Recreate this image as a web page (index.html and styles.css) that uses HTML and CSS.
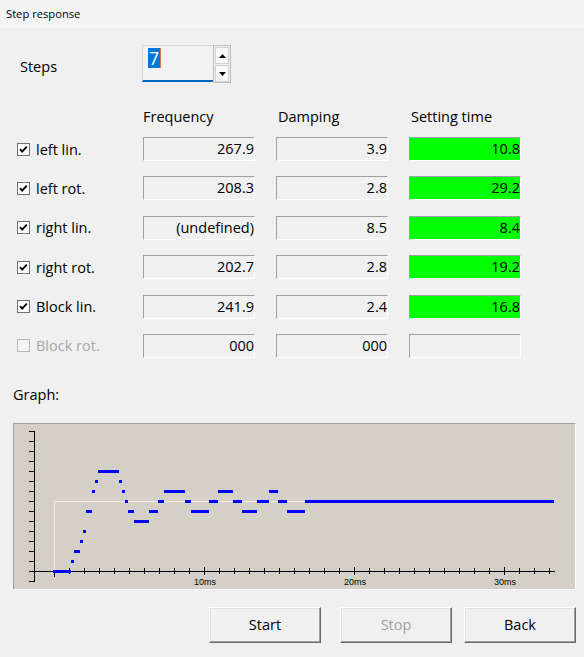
FILE: index.html
```html
<!DOCTYPE html>
<html>
<head>
<meta charset="utf-8">
<link rel="stylesheet" href="styles.css">
</head>
<body>
<div class="titlebar">Step response</div>

<div class="steps">
  <span class="steps-label">Steps</span>
  <div class="spin">
    <div class="spin-input"><span class="sel">7</span></div>
    <div class="spin-btns">
      <div class="spin-btn"><svg width="7" height="4" viewBox="0 0 7 4"><path d="M0 4 L3.5 0 L7 4 Z" fill="#000"/></svg></div>
      <div class="spin-btn"><svg width="7" height="4" viewBox="0 0 7 4"><path d="M0 0 L3.5 4 L7 0 Z" fill="#000"/></svg></div>
    </div>
  </div>
</div>

<div class="head">
  <span></span>
  <span>Frequency</span>
  <span class="shift">Damping</span>
  <span class="shift">Setting time</span>
</div>

<div class="table">
  <label class="chk"><svg class="box" width="13" height="13" viewBox="0 0 13 13"><rect x="0.5" y="0.5" width="12" height="12" fill="#fff" stroke="#707070"/><path d="M3 6.2 L5.2 8.6 L9.8 3.6" fill="none" stroke="#000" stroke-width="1.8"/></svg>left lin.</label>
  <div class="field">267.9</div>
  <div class="field">3.9</div>
  <div class="field ok">10.8</div>

  <label class="chk"><svg class="box" width="13" height="13" viewBox="0 0 13 13"><rect x="0.5" y="0.5" width="12" height="12" fill="#fff" stroke="#707070"/><path d="M3 6.2 L5.2 8.6 L9.8 3.6" fill="none" stroke="#000" stroke-width="1.8"/></svg>left rot.</label>
  <div class="field">208.3</div>
  <div class="field">2.8</div>
  <div class="field ok">29.2</div>

  <label class="chk"><svg class="box" width="13" height="13" viewBox="0 0 13 13"><rect x="0.5" y="0.5" width="12" height="12" fill="#fff" stroke="#707070"/><path d="M3 6.2 L5.2 8.6 L9.8 3.6" fill="none" stroke="#000" stroke-width="1.8"/></svg>right lin.</label>
  <div class="field">(undefined)</div>
  <div class="field">8.5</div>
  <div class="field ok">8.4</div>

  <label class="chk"><svg class="box" width="13" height="13" viewBox="0 0 13 13"><rect x="0.5" y="0.5" width="12" height="12" fill="#fff" stroke="#707070"/><path d="M3 6.2 L5.2 8.6 L9.8 3.6" fill="none" stroke="#000" stroke-width="1.8"/></svg>right rot.</label>
  <div class="field">202.7</div>
  <div class="field">2.8</div>
  <div class="field ok">19.2</div>

  <label class="chk"><svg class="box" width="13" height="13" viewBox="0 0 13 13"><rect x="0.5" y="0.5" width="12" height="12" fill="#fff" stroke="#707070"/><path d="M3 6.2 L5.2 8.6 L9.8 3.6" fill="none" stroke="#000" stroke-width="1.8"/></svg>Block lin.</label>
  <div class="field">241.9</div>
  <div class="field">2.4</div>
  <div class="field ok">16.8</div>

  <label class="chk disabled"><svg class="box" width="13" height="13" viewBox="0 0 13 13"><rect x="0.5" y="0.5" width="12" height="12" fill="#f4f4f4" stroke="#b4b4b4"/></svg>Block rot.</label>
  <div class="field">000</div>
  <div class="field">000</div>
  <div class="field"></div>
</div>

<div class="graph-label">Graph:</div>

<div class="graph">
  <svg width="561" height="165" viewBox="14 424 561 165">
    <path d="M54.5 571 V501.5 H305" fill="none" stroke="#ececec" stroke-width="1"/>
    <g fill="none" stroke="#000" stroke-width="1">
      <path d="M34.5 431 V582 M29 571.5 H555"/>
      <path d="M29 431.5h5M29 441.5h5M29 451.5h5M29 461.5h5M29 471.5h5M29 481.5h5M29 491.5h5M29 501.5h5M29 511.5h5M29 521.5h5M29 531.5h5M29 541.5h5M29 551.5h5M29 561.5h5M29 571.5h5M29 581.5h5"/>
      <path d="M54.5 571v6M69.5 568v6M84.5 568v6M99.5 568v6M114.5 568v6M129.5 568v6M144.5 568v6M159.5 568v6M174.5 568v6M189.5 568v6M204.5 567v8M219.5 568v6M234.5 568v6M249.5 568v6M264.5 568v6M279.5 568v6M294.5 568v6M309.5 568v6M324.5 568v6M339.5 568v6M354.5 567v8M369.5 568v6M384.5 568v6M399.5 568v6M414.5 568v6M429.5 568v6M444.5 568v6M459.5 568v6M474.5 568v6M489.5 568v6M504.5 567v8M519.5 568v6M534.5 568v6M549.5 568v6"/>
    </g>
    <g class="axis-text">
      <text x="205" y="585" text-anchor="middle">10ms</text>
      <text x="355" y="585" text-anchor="middle">20ms</text>
      <text x="505" y="585" text-anchor="middle">30ms</text>
    </g>
    <g fill="#0000ff">
      <rect x="53" y="570" width="18" height="3"/>
      <rect x="71" y="560" width="3" height="3"/>
      <rect x="74" y="550" width="6" height="3"/>
      <rect x="80" y="540" width="3" height="3"/>
      <rect x="83" y="530" width="3" height="3"/>
      <rect x="86" y="510" width="6" height="3"/>
      <rect x="92" y="490" width="3" height="3"/>
      <rect x="95" y="480" width="3" height="3"/>
      <rect x="98" y="470" width="21" height="3"/>
      <rect x="119" y="480" width="3" height="3"/>
      <rect x="122" y="490" width="3" height="3"/>
      <rect x="125" y="500" width="3" height="3"/>
      <rect x="128" y="510" width="6" height="3"/>
      <rect x="134" y="520" width="15" height="3"/>
      <rect x="149" y="510" width="9" height="3"/>
      <rect x="158" y="500" width="6" height="3"/>
      <rect x="164" y="490" width="21" height="3"/>
      <rect x="185" y="500" width="6" height="3"/>
      <rect x="191" y="510" width="18" height="3"/>
      <rect x="209" y="500" width="9" height="3"/>
      <rect x="218" y="490" width="15" height="3"/>
      <rect x="233" y="500" width="9" height="3"/>
      <rect x="242" y="510" width="15" height="3"/>
      <rect x="257" y="500" width="12" height="3"/>
      <rect x="269" y="490" width="9" height="3"/>
      <rect x="278" y="500" width="9" height="3"/>
      <rect x="287" y="510" width="18" height="3"/>
      <rect x="305" y="500" width="249" height="3"/>
    </g>
  </svg>
</div>

<div class="buttons">
  <button class="btn start">Start</button>
  <button class="btn stop" disabled>Stop</button>
  <button class="btn">Back</button>
</div>
</body>
</html>
```

FILE: styles.css
```css
html, body {
  margin: 0;
  padding: 0;
}
body {
  width: 584px;
  height: 657px;
  background: #f0f0f0;
  font-family: "Open Sans", "Noto Sans", sans-serif;
  font-size: 14.5px;
  color: #000;
  overflow: hidden;
}
.titlebar {
  height: 28px;
  line-height: 28px;
  padding-left: 6px;
  font-size: 11.2px;
  background: #f4f4f4;
}
.steps {
  display: flex;
  margin-top: 17px;
  height: 37px;
}
.steps-label {
  box-sizing: border-box;
  width: 142px;
  padding-left: 20px;
  padding-top: 11px;
  line-height: 22px;
}
.spin {
  display: flex;
}
.spin-input {
  box-sizing: border-box;
  width: 71px;
  height: 37px;
  border-top: 1px solid #d8d8d8;
  border-left: 1px solid #d8d8d8;
  border-bottom: 2px solid #0067c0;
  padding-left: 5px;
  padding-top: 2px;
  background: #f2f2f2;
}
.sel {
  display: inline-block;
  background: #0078d7;
  color: #fff;
  font-size: 17.5px;
  line-height: 20px;
  height: 20px;
  padding: 0 1px 0 1px;
  border-right: 1px solid #e07a3a;
}
.spin-btns {
  box-sizing: border-box;
  width: 18px;
  height: 38px;
  border: 1px solid #bdbdbd;
  padding: 1px 1px 0 1px;
  display: flex;
  flex-direction: column;
  gap: 1px;
  background: #f0f0f0;
}
.spin-btn {
  box-sizing: border-box;
  height: 17px;
  border: 1px solid #d0d0d0;
  background: #f9f9f9;
  display: flex;
  align-items: center;
  justify-content: center;
}
.head {
  display: grid;
  grid-template-columns: 122px 112px 112px 112px;
  column-gap: 21px;
  margin-top: 24px;
  line-height: 22px;
  height: 22px;
}
.head .shift {
  padding-left: 2px;
}
.table {
  display: grid;
  grid-template-columns: 122px 112px 112px 112px;
  grid-auto-rows: 24px;
  column-gap: 21px;
  row-gap: 15.4px;
  margin-top: 9px;
}
.chk {
  display: flex;
  align-items: center;
  padding-left: 17px;
  gap: 6px;
}
.chk .box {
  flex: none;
}
.chk.disabled {
  color: #a8a8a8;
}
.field {
  box-sizing: border-box;
  height: 24px;
  border-top: 1px solid #a0a0a0;
  border-left: 1px solid #a0a0a0;
  border-bottom: 1px solid #ffffff;
  border-right: 1px solid #ffffff;
  text-align: right;
  padding-right: 0;
  line-height: 22px;
  background: #f0f0f0;
  white-space: nowrap;
}
.field.ok {
  background: #00ff00;
}
.graph-label {
  margin-top: 26px;
  padding-left: 13px;
  line-height: 22px;
  height: 22px;
}
.graph {
  box-sizing: border-box;
  margin-top: 17px;
  margin-left: 13px;
  width: 563px;
  height: 167px;
  border-top: 1px solid #a0a0a0;
  border-left: 1px solid #a0a0a0;
  border-bottom: 1px solid #ffffff;
  border-right: 1px solid #ffffff;
  background: #d4d0c8;
}
.graph svg {
  display: block;
}
.axis-text {
  font-family: "Liberation Sans", Arial, sans-serif;
  font-size: 9px;
  fill: #000;
}
.buttons {
  display: flex;
  justify-content: flex-end;
  margin-top: 17px;
  padding-right: 8px;
}
.btn {
  box-sizing: border-box;
  width: 112px;
  height: 36px;
  background: #f0f0f0;
  border-top: 1px solid #ffffff;
  border-left: 1px solid #ffffff;
  border-right: 1px solid #696969;
  border-bottom: 1px solid #696969;
  box-shadow: inset -1px -1px 0 #a0a0a0, inset 1px 1px 0 #e3e3e3;
  font-family: "Open Sans", "Noto Sans", sans-serif;
  font-size: 14.5px;
  color: #000;
  padding: 0;
}
.btn.start {
  margin-right: 19px;
}
.btn.stop {
  margin-right: 12px;
  color: #a0a0a0;
}
```
